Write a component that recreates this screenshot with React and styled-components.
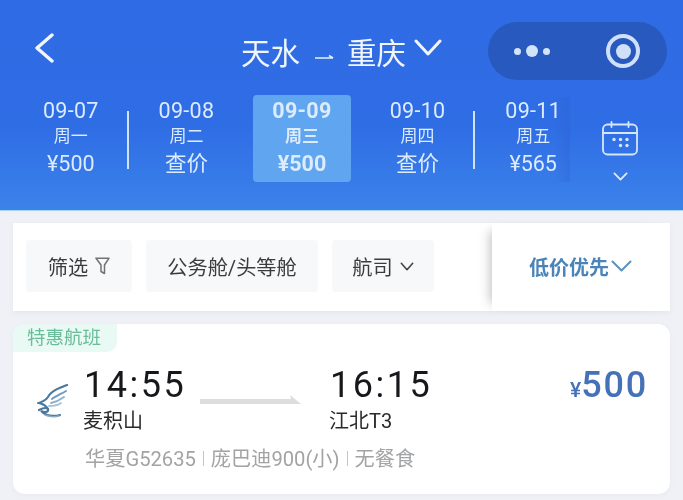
import React from "react";
import styled, { createGlobalStyle } from "styled-components";

const Global = createGlobalStyle`
  html, body { margin: 0; padding: 0; background: #eff1f6; }
  body { font-family: "Roboto", "Noto Sans CJK SC", sans-serif; }
`;

const Page = styled.div`
  width: 683px;
  height: 500px;
  overflow: hidden;
  background: #eff1f6;
  display: flex;
  flex-direction: column;
  filter: blur(0.45px);
`;

const Header = styled.header`
  height: 211px;
  box-sizing: border-box;
  padding-top: 22px;
  background: linear-gradient(180deg, #2f6be4 0%, #2f6de5 60%, #3b82ea 100%);
  border-bottom: 1px solid #a9d4fb;
  display: flex;
  flex-direction: column;
  gap: 15px;
`;

const TopBar = styled.div`
  height: 58px;
  padding: 0 16px 0 33px;
  display: flex;
  align-items: center;
`;

const Back = styled.svg`
  width: 22px;
  height: 30px;
  margin-top: -6px;
  flex: none;
`;

const Route = styled.div`
  margin-left: 186px;
  width: 247px;
  flex: none;
  display: flex;
  align-items: center;
  color: #f1f6fe;
  font-size: 29.5px;
  line-height: 36px;
  margin-top: 5px;
`;

const Capsule = styled.div`
  margin-left: auto;
  width: 179px;
  height: 58px;
  border-radius: 29px;
  background: #2859bf;
  display: grid;
  grid-template-columns: 88px 91px;
  align-items: center;
  justify-items: center;
`;

const Dots = styled.div`
  display: flex;
  align-items: center;
  gap: 5px;
`;

const Dot = styled.span`
  width: ${(p) => p.$size}px;
  height: ${(p) => p.$size}px;
  border-radius: 50%;
  background: #d3e3f8;
`;

const Target = styled.div`
  width: 34px;
  height: 34px;
  margin-left: 3px;
  box-sizing: border-box;
  border: 4px solid #cfe0f8;
  border-radius: 50%;
  display: flex;
  align-items: center;
  justify-content: center;
  &::after {
    content: "";
    width: 15px;
    height: 15px;
    border-radius: 50%;
    background: #cfe0f8;
  }
`;

const DateRow = styled.div`
  display: flex;
  height: 87px;
`;

const Strip = styled.div`
  position: relative;
  width: 570px;
  padding-left: 13px;
  box-sizing: border-box;
  display: grid;
  grid-template-columns: repeat(5, 115.6px);
  overflow: hidden;
  &::after {
    content: "";
    position: absolute;
    right: 0;
    top: 2px;
    bottom: 0;
    width: 16px;
    background: linear-gradient(90deg, rgba(40, 85, 190, 0), rgba(40, 85, 190, 0.22));
  }
`;

const DateCell = styled.div`
  position: relative;
  display: flex;
  flex-direction: column;
  align-items: center;
  color: #dcebfd;
  font-weight: ${(p) => (p.$active ? 700 : 400)};
  &::before {
    content: "";
    display: ${(p) => (p.$active ? "block" : "none")};
    position: absolute;
    left: 9px;
    right: 9px;
    top: 0;
    bottom: 0;
    border-radius: 4px;
    background: #5fa5f0;
  }
  &::after {
    content: "";
    display: ${(p) => (p.$divider ? "block" : "none")};
    position: absolute;
    right: 0;
    top: 16px;
    width: 2px;
    height: 58px;
    background: #cfe3fb;
  }
`;

const DateText = styled.span`
  position: relative;
  font-size: 21.5px;
  line-height: 26px;
  margin-top: 3px;
  letter-spacing: 0.3px;
`;

const WeekText = styled.span`
  position: relative;
  font-size: 17px;
  line-height: 25px;
`;

const PriceText = styled.span`
  position: relative;
  font-size: 21.5px;
  line-height: 28px;
  margin-top: 1px;
`;

const CalendarCol = styled.div`
  flex: 1;
  display: flex;
  flex-direction: column;
  align-items: center;
  padding: 26px 13px 0 0;
  gap: 16px;
`;

const FilterBar = styled.section`
  margin: 12px 13px 0;
  height: 88px;
  background: #fff;
  display: flex;
  align-items: center;
  box-shadow: 0 2px 5px rgba(200, 205, 215, 0.25);
`;

const Chips = styled.div`
  flex: 1;
  padding: 0 0 2px 13px;
  display: flex;
  gap: 14px;
  align-items: center;
`;

const Chip = styled.div`
  height: 52px;
  width: ${(p) => p.$w}px;
  box-sizing: border-box;
  background: #f7f8fa;
  border-radius: 4px;
  display: flex;
  align-items: center;
  justify-content: center;
  gap: 7px;
  color: #3c3c3e;
  font-size: 20.2px;
`;

const Sort = styled.div`
  width: 178px;
  height: 100%;
  background: #fff;
  box-sizing: border-box;
  padding: 0 0 2px 37px;
  display: flex;
  align-items: center;
  gap: 2px;
  color: #4b84b8;
  font-size: 20px;
  font-weight: 700;
  box-shadow: -10px 0 10px -8px rgba(120, 120, 120, 0.45);
`;

const Card = styled.article`
  margin: 13px 13px 0;
  height: 170px;
  background: #fff;
  border-radius: 12px;
  position: relative;
  box-sizing: border-box;
  padding: 46px 23px 0 24px;
  display: grid;
  grid-template-columns: 47px 116px 130px 120px 1fr;
  grid-template-rows: 37px 28px 36px;
  box-shadow: 0 1px 4px rgba(215, 220, 228, 0.3);
`;

const Tag = styled.div`
  position: absolute;
  left: 0;
  top: 0;
  width: 104px;
  height: 28px;
  border-radius: 10px 0 10px 0;
  background: #e9f9f3;
  color: #69bd9b;
  font-size: 18.5px;
  line-height: 28px;
  text-align: center;
  text-indent: -2px;
`;

const Logo = styled.svg`
  grid-row: 1 / 3;
  width: 32px;
  height: 36px;
  margin-top: 14px;
`;

const Time = styled.div`
  font-size: 36px;
  line-height: 30px;
  letter-spacing: 2.5px;
  color: #16181b;
  white-space: nowrap;
`;

const Place = styled.div`
  font-size: 20px;
  line-height: 28px;
  color: #2a2a2c;
  grid-column: ${(p) => p.$col};
  grid-row: 2;
  margin-left: -1px;
`;

const Line = styled.svg`
  width: 101px;
  height: 10px;
  margin-top: 25px;
`;

const Price = styled.div`
  justify-self: end;
  display: flex;
  align-items: baseline;
  color: #4571b8;
  font-size: 36px;
  line-height: 30px;
  font-weight: 500;
  letter-spacing: 1.8px;
  margin-right: -1px;
`;

const Yen = styled.span`
  font-size: 21px;
  letter-spacing: 0;
`;

const Details = styled.div`
  grid-column: 2 / 6;
  grid-row: 3;
  margin-left: 1px;
  padding-top: 11px;
  color: #a2a3a5;
  font-size: 20.2px;
  line-height: 28px;
  display: flex;
  align-items: center;
  gap: 7px;
`;

const Sep = styled.span`
  width: 1px;
  height: 15px;
  background: #c4c5c7;
`;

const days = [
  { d: "09-07", w: "周一", p: "¥500", divider: true },
  { d: "09-08", w: "周二", p: "查价" },
  { d: "09-09", w: "周三", p: "¥500", active: true },
  { d: "09-10", w: "周四", p: "查价", divider: true },
  { d: "09-11", w: "周五", p: "¥565" },
];

const Chevron = ({ w, h, color, sw, style }) => (
  <svg width={w} height={h} viewBox={`0 0 ${w} ${h}`} fill="none" style={style}>
    <path
      d={`M${sw / 2 + 0.5} ${sw / 2 + 0.5} L${w / 2} ${h - sw / 2 - 0.5} L${w - sw / 2 - 0.5} ${sw / 2 + 0.5}`}
      stroke={color}
      strokeWidth={sw}
      strokeLinecap="round"
      strokeLinejoin="round"
    />
  </svg>
);

export default function App() {
  return (
    <Page>
      <Global />
      <Header>
        <TopBar>
          <Back viewBox="0 0 22 30" fill="none">
            <path d="M19 2 L4 15 L19 28" stroke="#f2f7fe" strokeWidth="3.4" strokeLinecap="round" strokeLinejoin="round" />
          </Back>
          <Route>
            <span>天水</span>
            <svg width="47" height="12" viewBox="0 0 47 12" fill="none" style={{ marginTop: 4 }}>
              <path d="M15 8 H33 M29 5.5 L33 8" stroke="#e6effc" strokeWidth="1.6" />
            </svg>
            <span>重庆</span>
            <Chevron w={28} h={17} color="#f1f6fe" sw={3} style={{ marginLeft: 8, marginTop: -13 }} />
          </Route>
          <Capsule>
            <Dots>
              <Dot $size={7} />
              <Dot $size={12} />
              <Dot $size={7} />
            </Dots>
            <Target />
          </Capsule>
        </TopBar>
        <DateRow>
          <Strip>
            {days.map((x) => (
              <DateCell key={x.d} $active={x.active} $divider={x.divider}>
                <DateText>{x.d}</DateText>
                <WeekText>{x.w}</WeekText>
                <PriceText>{x.p}</PriceText>
              </DateCell>
            ))}
          </Strip>
          <CalendarCol>
            <svg width="36" height="35" viewBox="0 0 36 35" fill="none">
              <rect x="1" y="3.5" width="34" height="30" rx="4.5" stroke="#d5e6fb" strokeWidth="1.8" />
              <path d="M1 12 H35 M9.5 1 V6 M26.5 1 V6" stroke="#d5e6fb" strokeWidth="1.8" strokeLinecap="round" />
              <g fill="#d5e6fb">
                <circle cx="12" cy="18.5" r="1.7" />
                <circle cx="18.5" cy="18.5" r="1.7" />
                <circle cx="25" cy="18.5" r="1.7" />
                <circle cx="18.5" cy="24.5" r="1.7" />
                <circle cx="25" cy="24.5" r="1.7" />
              </g>
            </svg>
            <Chevron w={15} h={9} color="#dcebfd" sw={1.8} />
          </CalendarCol>
        </DateRow>
      </Header>

      <FilterBar>
        <Chips>
          <Chip $w={106}>
            <span>筛选</span>
            <svg width="15" height="18" viewBox="0 0 15 18" fill="none">
              <path d="M1 1.2 H14 L9.5 8 V16.5 L6 14.5 V8 Z" stroke="#707274" strokeWidth="1.5" strokeLinejoin="round" />
            </svg>
          </Chip>
          <Chip $w={172}>公务舱/头等舱</Chip>
          <Chip $w={102}>
            <span>航司</span>
            <Chevron w={14} h={9} color="#444" sw={1.6} />
          </Chip>
        </Chips>
        <Sort>
          <span>低价优先</span>
          <Chevron w={21} h={12} color="#5b92bf" sw={2} />
        </Sort>
      </FilterBar>

      <Card>
        <Tag>特惠航班</Tag>
        <Logo viewBox="0 0 32 36" fill="none" strokeLinecap="round">
          <path d="M30 1 C22 4 14 7 11 13 C9 16 7 17 2 19 C6 20 9 21 11 25" stroke="#4a789f" strokeWidth="2.2" />
          <path d="M29 7 C24 10 19 12 15 15" stroke="#6f9cc0" strokeWidth="2" />
          <path d="M27 13 C23 16 19 18 14 19" stroke="#8fb2cc" strokeWidth="2" />
          <path d="M24 19 C20 22 16 22 12 22" stroke="#a9c3d6" strokeWidth="1.8" />
          <path d="M2 26 C6 24 9 23 11 25 C12 28 8 29 4 27 C8 31 15 33 23 31" stroke="#4a789f" strokeWidth="2.2" />
          <path d="M8 31 C13 33 18 33 22 32" stroke="#8fa9bf" strokeWidth="1.4" />
        </Logo>
        <Time>14:55</Time>
        <Line viewBox="0 0 101 10">
          <path d="M0 4 H91 L90 0 L101 9 H0 Z" fill="#dcdddf" />
        </Line>
        <Time>16:15</Time>
        <Price>
          <Yen>¥</Yen>500
        </Price>
        <Place $col={2}>麦积山</Place>
        <Place $col={4}>江北T3</Place>
        <Details>
          <span>华夏G52635</span>
          <Sep />
          <span>庞巴迪900(小)</span>
          <Sep />
          <span>无餐食</span>
        </Details>
      </Card>
    </Page>
  );
}
